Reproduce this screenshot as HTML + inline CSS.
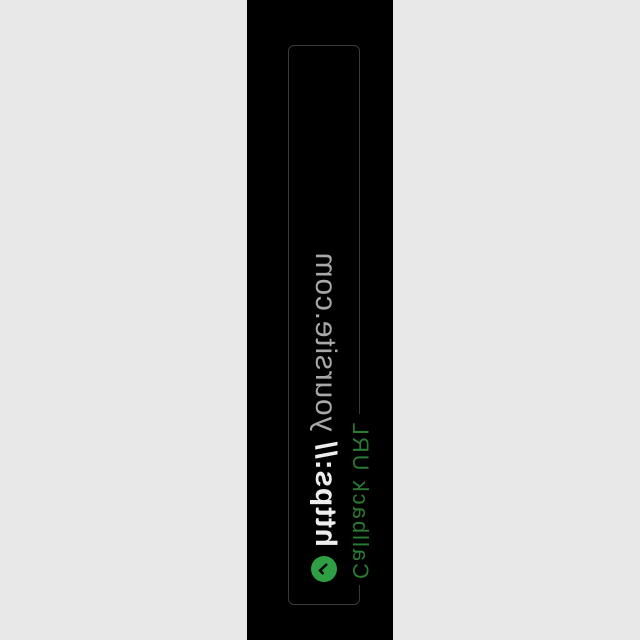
<!DOCTYPE html>
<html><head><style>
html,body{margin:0;padding:0;width:640px;height:640px;background:#e8e8e8;overflow:hidden;font-family:"Liberation Sans",sans-serif}
.strip{position:absolute;left:247px;top:0;width:146px;height:640px;background:#000}
.f{position:absolute;left:0;top:0;width:560px;height:72px;transform-origin:0 0;transform:matrix(0,-1,-1,0,360,605)}
.b{position:absolute;inset:0;border:1px solid #3a3a3a;border-radius:6px}
.lab{position:absolute;left:20px;top:-13px;padding:0 6px;background:#000;color:#2a7a34;font-size:22px;line-height:26px;letter-spacing:2px}
.ic{position:absolute;left:23px;top:23px;width:26px;height:26px;border-radius:50%;background:#2ea043}
.t{position:absolute;left:58px;top:18px;font-size:30px;line-height:34px;color:#a8a8a8;white-space:nowrap;letter-spacing:0.8px}
.t b{color:#eee}
</style></head><body>
<div class="strip"></div>
<div class="f">
<div class="b"></div>
<div class="lab">Callback URL</div>
<div class="ic"><svg width="26" height="26"><path d="M8 13.5l3.5 3.5 6.5-7" stroke="#000" stroke-width="2.5" fill="none"/></svg></div>
<div class="t"><b>https://</b> yoursite.com</div>
</div>
</body></html>
